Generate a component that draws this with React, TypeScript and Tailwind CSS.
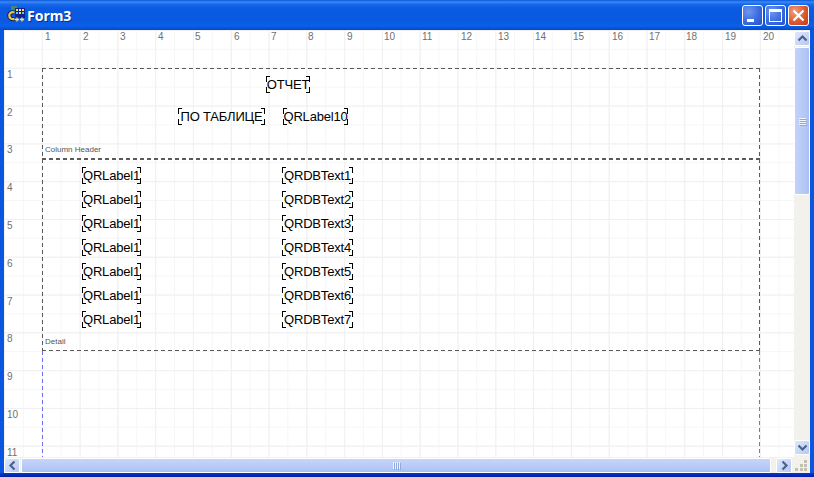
import React from "react";

const hRuler = [
  [1, 45], [2, 83], [3, 120], [4, 158], [5, 195], [6, 234], [7, 271], [8, 308], [9, 347], [10, 384],
  [11, 422], [12, 461], [13, 498], [14, 535], [15, 573], [16, 612], [17, 649], [18, 686], [19, 725], [20, 763],
];
const vRuler = [
  [1, 71], [2, 109], [3, 146], [4, 184], [5, 222], [6, 260], [7, 298], [8, 335], [9, 373], [10, 411], [11, 449],
];

const Corner = ({ className }: { className: string }) => (
  <span className={"absolute w-[4px] h-[6px] border-black " + className}></span>
);

const QRItem = ({ text, x, y, w }: { text: string; x: number; y: number; w: number }) => (
  <div
    className="absolute h-[17px] leading-[18px] text-[13px] tracking-[-0.2px] text-black text-center whitespace-nowrap font-['Liberation_Sans',Arial,sans-serif]"
    style={{ left: x, top: y, width: w }}
  >
    {text}
    <Corner className="left-0 top-0 border-l-[1.5px] border-t" />
    <Corner className="right-0 top-0 border-r-[1.5px] border-t" />
    <Corner className="left-0 bottom-0 border-l-[1.5px] border-b" />
    <Corner className="right-0 bottom-0 border-r-[1.5px] border-b" />
  </div>
);

const CaptionButton = ({ close, children }: { close?: boolean; children: React.ReactNode }) => (
  <div
    className={
      "relative w-[21px] h-[21px] rounded-[3px] border border-white " +
      (close
        ? "bg-[radial-gradient(circle_at_30%_30%,#f0a080,#dc5a30_55%,#c03a18)]"
        : "bg-[radial-gradient(circle_at_30%_30%,#6f96ee,#3c6ae0_55%,#2450c8)]")
    }
  >
    {children}
  </div>
);

const ScrollButton = ({ d, className }: { d: string; className?: string }) => (
  <div
    className={
      "flex items-center justify-center rounded-[2px] border border-white bg-[linear-gradient(135deg,#dfe8fd,#b4c8f6)] " +
      (className || "")
    }
  >
    <svg width="11" height="11" viewBox="0 0 11 11">
      <path d={d} fill="none" stroke="#4d6185" strokeWidth="2.2" />
    </svg>
  </div>
);

const Grip = ({ vertical }: { vertical?: boolean }) => (
  <div className={"flex gap-[1px] " + (vertical ? "flex-col" : "flex-row")}>
    {[0, 1, 2, 3].map((i) => (
      <span key={i} className={(vertical ? "w-[7px] h-[1px]" : "w-[1px] h-[7px]") + " bg-[#eef3fe] shadow-[1px_1px_0_#8fa8e0]"}></span>
    ))}
  </div>
);

const dashH = "absolute bg-[repeating-linear-gradient(90deg,#5a5a5a_0px,#5a5a5a_4px,transparent_4px,transparent_7px)]";
const dashV = "absolute bg-[repeating-linear-gradient(180deg,#5a5a5a_0px,#5a5a5a_4px,transparent_4px,transparent_7px)]";
const dashPurple = "absolute bg-[repeating-linear-gradient(180deg,#7070f0_0px,#7070f0_4px,transparent_4px,transparent_7px)]";

const App = () => {
  const labels = [175, 199, 223, 247, 271, 295, 319];

  return (
    <div className="w-[814px] h-[477px] overflow-hidden flex flex-col bg-[#0a56e0] font-['Liberation_Sans',Arial,sans-serif]">
      {/* title bar */}
      <div className="h-[30px] shrink-0 flex items-center pl-[6px] pr-[5px] bg-[linear-gradient(180deg,#0a57d8_0px,#3a8af5_2px,#1a6aee_4px,#0a5be2_8px,#0a58e0_20px,#0a5fea_26px,#0648c8_30px)]">
        <svg width="19" height="20" viewBox="0 0 19 20" className="shrink-0">
          <rect x="5" y="1" width="6" height="5" fill="#3f8a78" />
          <rect x="9" y="3" width="10" height="10" fill="#15208c" />
          <rect x="10" y="4" width="2" height="2" fill="#f5e050" />
          <rect x="13" y="4" width="2" height="2" fill="#e8ecff" />
          <rect x="16" y="4" width="2" height="2" fill="#f5e050" />
          <rect x="10" y="7" width="2" height="2" fill="#50d0f0" />
          <rect x="13" y="7" width="2" height="2" fill="#f5e050" />
          <rect x="16" y="7" width="2" height="2" fill="#50d0f0" />
          <path d="M8.500 7.500 C1.500 5.500 1.500 15.500 8.500 14" fill="none" stroke="#12185c" strokeWidth="4" />
          <path d="M8.500 7.500 C1.500 5.500 1.500 15.500 8.500 14" fill="none" stroke="#e8c840" strokeWidth="2.200" />
          <path d="M9 14.500 h4 M11 12.500 v4 M14 14.500 h4 M16 12.500 v4" stroke="#f5e070" strokeWidth="1.300" />
        </svg>
        <span className="ml-[2px] text-[14px] font-bold text-white font-['Noto_Sans',sans-serif] [text-shadow:1px_1px_0_#0a2f9c]">Form3</span>
        <div className="ml-auto flex gap-[2px]">
          <CaptionButton>
            <span className="absolute left-[4px] bottom-[3px] w-[7px] h-[3px] bg-white"></span>
          </CaptionButton>
          <CaptionButton>
            <span className="absolute left-[3px] top-[3px] w-[13px] h-[13px] border border-t-[3px] border-white"></span>
          </CaptionButton>
          <CaptionButton close>
            <svg width="19" height="19" viewBox="0 0 19 19" className="absolute left-0 top-0">
              <path d="M4.500 4.500 L14.500 14.500 M14.500 4.500 L4.500 14.500" stroke="#fff" strokeWidth="2.200" />
            </svg>
          </CaptionButton>
        </div>
      </div>

      {/* client area */}
      <div className="mx-[4px] flex-1 flex flex-col bg-[#f3f1ec] min-h-0">
        <div className="flex h-[427px]">
          {/* report canvas */}
          <div className="relative w-[790px] h-full overflow-hidden bg-white bg-[linear-gradient(90deg,#f0f0f0_1px,transparent_1px),linear-gradient(180deg,#f0f0f0_1px,transparent_1px),linear-gradient(90deg,#f6f6f6_1px,transparent_1px),linear-gradient(180deg,#f6f6f6_1px,transparent_1px)] bg-[size:37.8px_37.8px,37.8px_37.8px,18.9px_18.9px,18.9px_18.9px]">
            {hRuler.map(([n, x]) => (
              <span key={n} className="absolute top-[3px] text-[10px] leading-[8px] text-[#707070]" style={{ left: x - 4 }}>
                {n}
              </span>
            ))}
            {vRuler.map(([n, y]) => (
              <span key={n} className="absolute left-[3px] text-[10px] leading-[7px] text-[#707070]" style={{ top: y - 30 }}>
                {n}
              </span>
            ))}

            {/* bands */}
            <div className={dashH + " left-[38px] top-[38px] w-[718px] h-[1px]"}></div>
            <div className={dashH + " left-[38px] top-[128px] w-[718px] h-[2px]"}></div>
            <div className={dashH + " left-[38px] top-[320px] w-[718px] h-[1px]"}></div>
            <div className={dashV + " left-[38px] top-[38px] w-[1px] h-[282px]"}></div>
            <div className={dashV + " left-[755px] top-[38px] w-[1px] h-[282px]"}></div>
            <div className={dashPurple + " left-[38px] top-[321px] w-[1px] h-[106px]"}></div>
            <div className={dashPurple + " left-[755px] top-[321px] w-[1px] h-[106px]"}></div>
            <span className="absolute left-[41px] top-[116px] text-[8px] leading-[8px] text-[#555]">Column Header</span>
            <span className="absolute left-[41px] top-[308px] text-[8px] leading-[8px] text-[#555]">Detail</span>

            {/* report items, shifted by the client area's origin */}
            <QRItem text="ОТЧЕТ" x={262} y={46} w={44} />
            <QRItem text="ПО ТАБЛИЦЕ" x={174} y={78} w={87} />
            <QRItem text="QRLabel10" x={279} y={78} w={65} />
            {labels.map((y, i) => (
              <React.Fragment key={y}>
                <QRItem text="QRLabel1" x={78} y={y - 30 - 8} w={59} />
                <QRItem text={"QRDBText" + (i + 1)} x={278} y={y - 30 - 8} w={71} />
              </React.Fragment>
            ))}
          </div>

          {/* vertical scrollbar */}
          <div className="w-[16px] flex flex-col pt-[1px] pb-[2px]">
            <ScrollButton d="M1.500 7.500 L5.500 3.500 L9.500 7.500" className="h-[15px] shrink-0" />
            <div className="mt-[1px] h-[148px] shrink-0 flex items-center justify-center rounded-[2px] border border-white bg-[linear-gradient(90deg,#c2d2fa,#b4c8f6_70%,#a8bff2)]">
              <Grip vertical />
            </div>
            <div className="flex-1"></div>
            <ScrollButton d="M1.500 3.500 L5.500 7.500 L9.500 3.500" className="h-[15px] shrink-0" />
          </div>
        </div>

        {/* horizontal scrollbar */}
        <div className="h-[16px] flex items-center">
          <ScrollButton d="M7.500 1.500 L3.500 5.500 L7.500 9.500" className="w-[16px] h-[15px] shrink-0" />
          <div className="ml-[1px] w-[750px] h-[15px] flex items-center justify-center rounded-[2px] border border-white bg-[linear-gradient(180deg,#c6d5fb,#b4c8f6_70%,#a8bff2)]">
            <Grip />
          </div>
          <div className="flex-1"></div>
          <ScrollButton d="M3.500 1.500 L7.500 5.500 L3.500 9.500" className="w-[16px] h-[15px] shrink-0" />
          <div className="w-[17px] h-[16px] shrink-0 ml-[1px] grid grid-cols-3 content-end justify-end gap-[1px] p-[2px]">
            {[0, 0, 1, 0, 1, 1, 1, 1, 1].map((on, i) => (
              <span key={i} className={"w-[3px] h-[3px] " + (on ? "bg-[#c4bfb0]" : "")}></span>
            ))}
          </div>
        </div>
      </div>
      <div className="h-[4px] shrink-0 bg-[linear-gradient(180deg,#0735d0,#001ea0)]"></div>
    </div>
  );
};

export default App;
